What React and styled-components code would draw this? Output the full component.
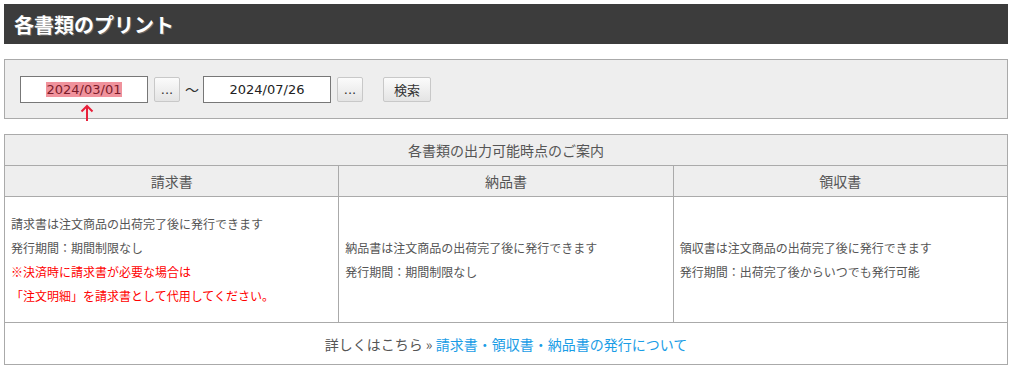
import React from 'react';
import styled, { createGlobalStyle } from 'styled-components';

const GlobalStyle = createGlobalStyle`
	body {
		margin: 0;
		background: #ffffff;
		font-family: "Noto Sans CJK JP", "DejaVu Sans", sans-serif;
		color: #555555;
	}
`;

const Page = styled.div`
	padding: 4px 5px 4px 4px;
`;

const TitleBar = styled.h1`
	margin: 0;
	height: 40px;
	padding: 0 10px;
	display: flex;
	align-items: center;
	background-color: #3c3c3c;
	color: #ffffff;
	font-size: 20px;
	font-weight: bold;
	text-shadow: 1px 1px 0 #6a6a6a;
`;

const SearchBox = styled.div`
	margin-top: 15px;
	height: 58px;
	padding: 0 15px;
	display: flex;
	align-items: center;
	border: 1px solid #aaaaaa;
	background-color: #eeeeee;
`;

const DateField = styled.div`
	position: relative;
	width: 128px;
	height: 27px;
	box-sizing: border-box;
	border: 1px solid #777777;
	background-color: #ffffff;
	display: flex;
	align-items: center;
	justify-content: center;
	font-family: "DejaVu Sans", sans-serif;
	font-size: 13px;
	color: #222222;
`;

const Selected = styled.span`
	background-color: #f0929c;
	color: #7a1c2a;
	padding: 0 1px;
`;

const Arrow = styled.svg`
	position: absolute;
	left: 59px;
	top: 27px;
`;

const PickButton = styled.button`
	width: ${props => props.$w || 26}px;
	height: 25px;
	padding: 0;
	margin-left: ${props => props.$ml || 6}px;
	border: 1px solid #c8c8c8;
	border-radius: 2px;
	background: linear-gradient(#fbfbfb, #e4e4e4);
	font-family: ${props => (props.$dots ? '"DejaVu Sans", sans-serif' : '"Noto Sans CJK JP", sans-serif')};
	font-size: 13px;
	color: #333333;
`;

const Tilde = styled.span`
	margin: 0 4px 0 5px;
	font-size: 14px;
	color: #333333;
`;

const Guide = styled.table`
	margin-top: 15px;
	width: 100%;
	border-collapse: collapse;
	table-layout: fixed;
	font-size: 12px;
	color: #555555;
`;

const HeadCell = styled.th`
	height: 30px;
	padding: 0;
	border: 1px solid #aaaaaa;
	background-color: #eeeeee;
	font-size: 14px;
	font-weight: normal;
	text-align: center;
`;

const BodyCell = styled.td`
	height: 125px;
	padding: 0 6px;
	border: 1px solid #aaaaaa;
	vertical-align: middle;
	line-height: 24px;
`;

const Line = styled.div`
	color: ${props => (props.$warn ? '#ff0000' : 'inherit')};
`;

const FootCell = styled.td`
	height: 41px;
	padding: 0;
	border: 1px solid #aaaaaa;
	text-align: center;
	font-size: 14px;
`;

const GuideLink = styled.a`
	color: #1a9de6;
	text-decoration: none;
`;

const columns = [
	{
		name: '請求書',
		lines: [
			{ text: '請求書は注文商品の出荷完了後に発行できます' },
			{ text: '発行期間：期間制限なし' },
			{ text: '※決済時に請求書が必要な場合は', warn: true },
			{ text: '「注文明細」を請求書として代用してください。', warn: true },
		],
	},
	{
		name: '納品書',
		lines: [
			{ text: '納品書は注文商品の出荷完了後に発行できます' },
			{ text: '発行期間：期間制限なし' },
		],
	},
	{
		name: '領収書',
		lines: [
			{ text: '領収書は注文商品の出荷完了後に発行できます' },
			{ text: '発行期間：出荷完了後からいつでも発行可能' },
		],
	},
];

const App = () => {
	return (
		<>
			<GlobalStyle />
			<Page>
				<TitleBar>各書類のプリント</TitleBar>
				<SearchBox>
					<DateField>
						<Selected>2024/03/01</Selected>
						<Arrow width="14" height="18" viewBox="0 0 14 18">
							<path
								d="M7 17V2M1.5 7.5L7 2l5.5 5.5"
								fill="none"
								stroke="#e8203a"
								strokeWidth="2"
							/>
						</Arrow>
					</DateField>
					<PickButton $dots>...</PickButton>
					<Tilde>〜</Tilde>
					<DateField>2024/07/26</DateField>
					<PickButton $dots>...</PickButton>
					<PickButton $w={48} $ml={20}>
						検索
					</PickButton>
				</SearchBox>
				<Guide>
					<thead>
						<tr>
							<HeadCell colSpan={3}>各書類の出力可能時点のご案内</HeadCell>
						</tr>
						<tr>
							{columns.map(col => (
								<HeadCell key={col.name}>{col.name}</HeadCell>
							))}
						</tr>
					</thead>
					<tbody>
						<tr>
							{columns.map(col => (
								<BodyCell key={col.name}>
									{col.lines.map(line => (
										<Line key={line.text} $warn={line.warn}>
											{line.text}
										</Line>
									))}
								</BodyCell>
							))}
						</tr>
						<tr>
							<FootCell colSpan={3}>
								詳しくはこちら »{' '}
								<GuideLink href="#">請求書・領収書・納品書の発行について</GuideLink>
							</FootCell>
						</tr>
					</tbody>
				</Guide>
			</Page>
		</>
	);
};

export default App;
